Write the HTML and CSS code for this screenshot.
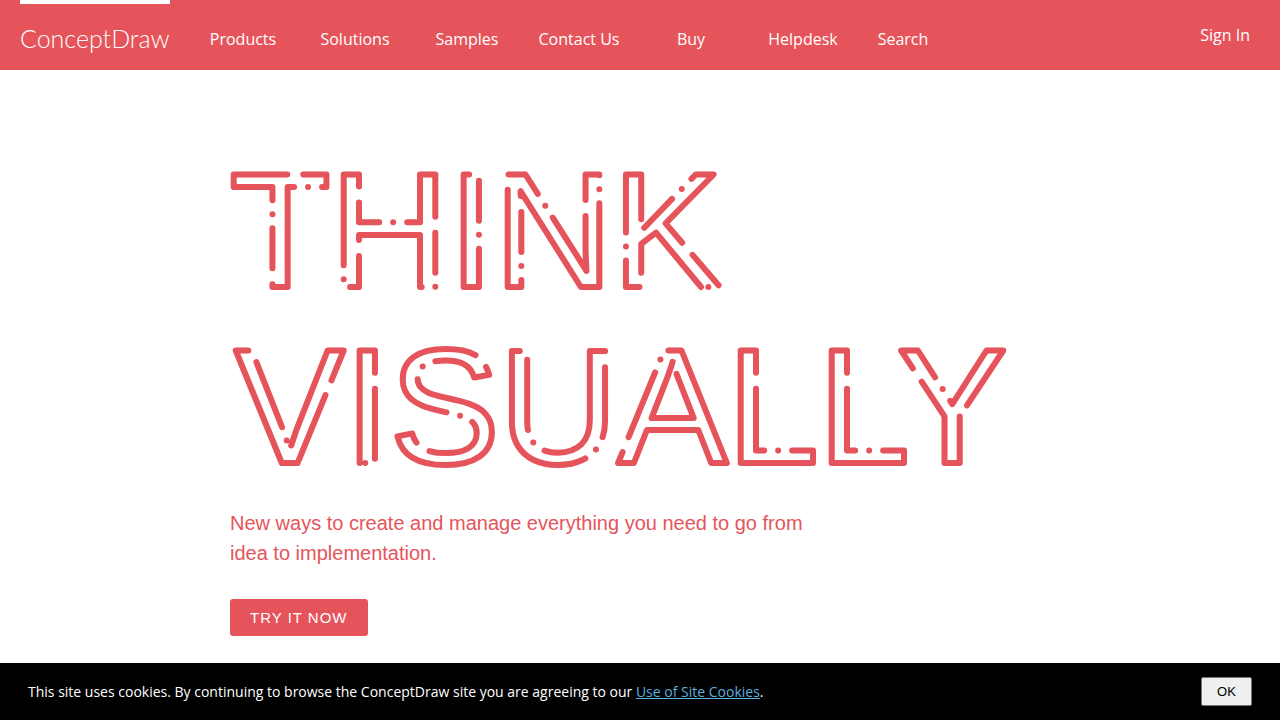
FILE: index.html
```html
<!DOCTYPE html>
<html lang="en">

<head>
  <meta charset="UTF-8">
  <meta name="viewport" content="width=device-width, initial-scale=1">
  <title>ConceptDraw</title>
  <link rel="stylesheet" href="styles.css">
</head>

<body>
  <header class="topbar">
    <a class="brand" href="#">ConceptDraw</a>
    <nav class="menu">
      <a href="#">Products</a>
      <a href="#">Solutions</a>
      <a href="#">Samples</a>
      <a href="#">Contact Us</a>
      <a href="#">Buy</a>
      <a href="#">Helpdesk</a>
      <a href="#">Search</a>
    </nav>
    <a class="signin" href="#">Sign In</a>
  </header>

  <main class="hero">
    <h1>
      <svg class="lettering" viewBox="0 0 820 310">
        <text class="think" x="0" y="119">THINK</text>
        <text class="visually" x="5" y="295">VISUALLY</text>
      </svg>
    </h1>
    <p>New ways to create and manage everything you need to go from idea to implementation.</p>
    <button class="try" type="button">TRY IT NOW</button>
  </main>

  <footer class="cookies">
    <p>This site uses cookies. By continuing to browse the ConceptDraw site you are agreeing to our <a href="#">Use of Site Cookies</a>.</p>
    <button type="button">OK</button>
  </footer>
</body>

</html>
```

FILE: styles.css
```css
* {
  box-sizing: border-box;
}

body {
  margin: 0;
  background: #fff;
  font-family: "Open Sans", sans-serif;
}

.topbar {
  display: flex;
  height: 70px;
  padding: 0 30px 0 20px;
  background: #e6545b;
  font-size: 16px;
  line-height: 22px;
}

.topbar a {
  color: #fff;
  text-decoration: none;
}

.topbar .brand {
  width: 150px;
  border-top: 4px solid #fff;
  padding-top: 18px;
  font-family: Lato, sans-serif;
  font-weight: 300;
  font-size: 25px;
  line-height: 32px;
  white-space: nowrap;
}

.menu {
  display: grid;
  grid-template-columns: repeat(6, 112px) 88px;
  margin-left: 17px;
  padding-top: 28px;
  text-align: center;
}

.signin {
  margin-left: auto;
  padding-top: 24px;
}

.hero {
  max-width: 820px;
  margin: 0 auto;
  padding: 98px 0 84px;
  color: #e6545b;
  font-family: "Liberation Sans", sans-serif;
}

.hero h1 {
  margin: 0;
}

.lettering {
  display: block;
  width: 100%;
  overflow: visible;
}

/* rounded, broken outline instead of a filled face */
.lettering text {
  font-family: "Liberation Sans", sans-serif;
  font-size: 164px;
  font-weight: 400;
  fill: none;
  stroke: #e6545b;
  stroke-width: 6px;
  stroke-linecap: round;
  stroke-linejoin: round;
}

.think {
  stroke-dasharray: 118 16 40 14 0 14;
}

.visually {
  stroke-dasharray: 150 16 70 14 0 14;
}

.hero p {
  max-width: 600px;
  margin: 30px 0 31px;
  font-size: 20px;
  line-height: 30px;
}

.try {
  display: block;
  height: 37px;
  padding: 0 20px;
  border: 0;
  border-radius: 3px;
  background: #e6545b;
  color: #fff;
  font-family: "Liberation Sans", sans-serif;
  font-size: 15px;
  letter-spacing: 1px;
}

.cookies {
  position: fixed;
  right: 0;
  bottom: 0;
  left: 0;
  display: flex;
  align-items: center;
  justify-content: space-between;
  padding: 14px 28px;
  background: #000;
  color: #fff;
  font-size: 14px;
}

.cookies p {
  margin: 0;
}

.cookies a {
  color: #5bb0df;
}

.cookies button {
  width: 51px;
  height: 29px;
  border: 1px solid #767676;
  border-radius: 2px;
  background: #efefef;
  color: #000;
  font-family: "Liberation Sans", sans-serif;
  font-size: 13px;
}
```
